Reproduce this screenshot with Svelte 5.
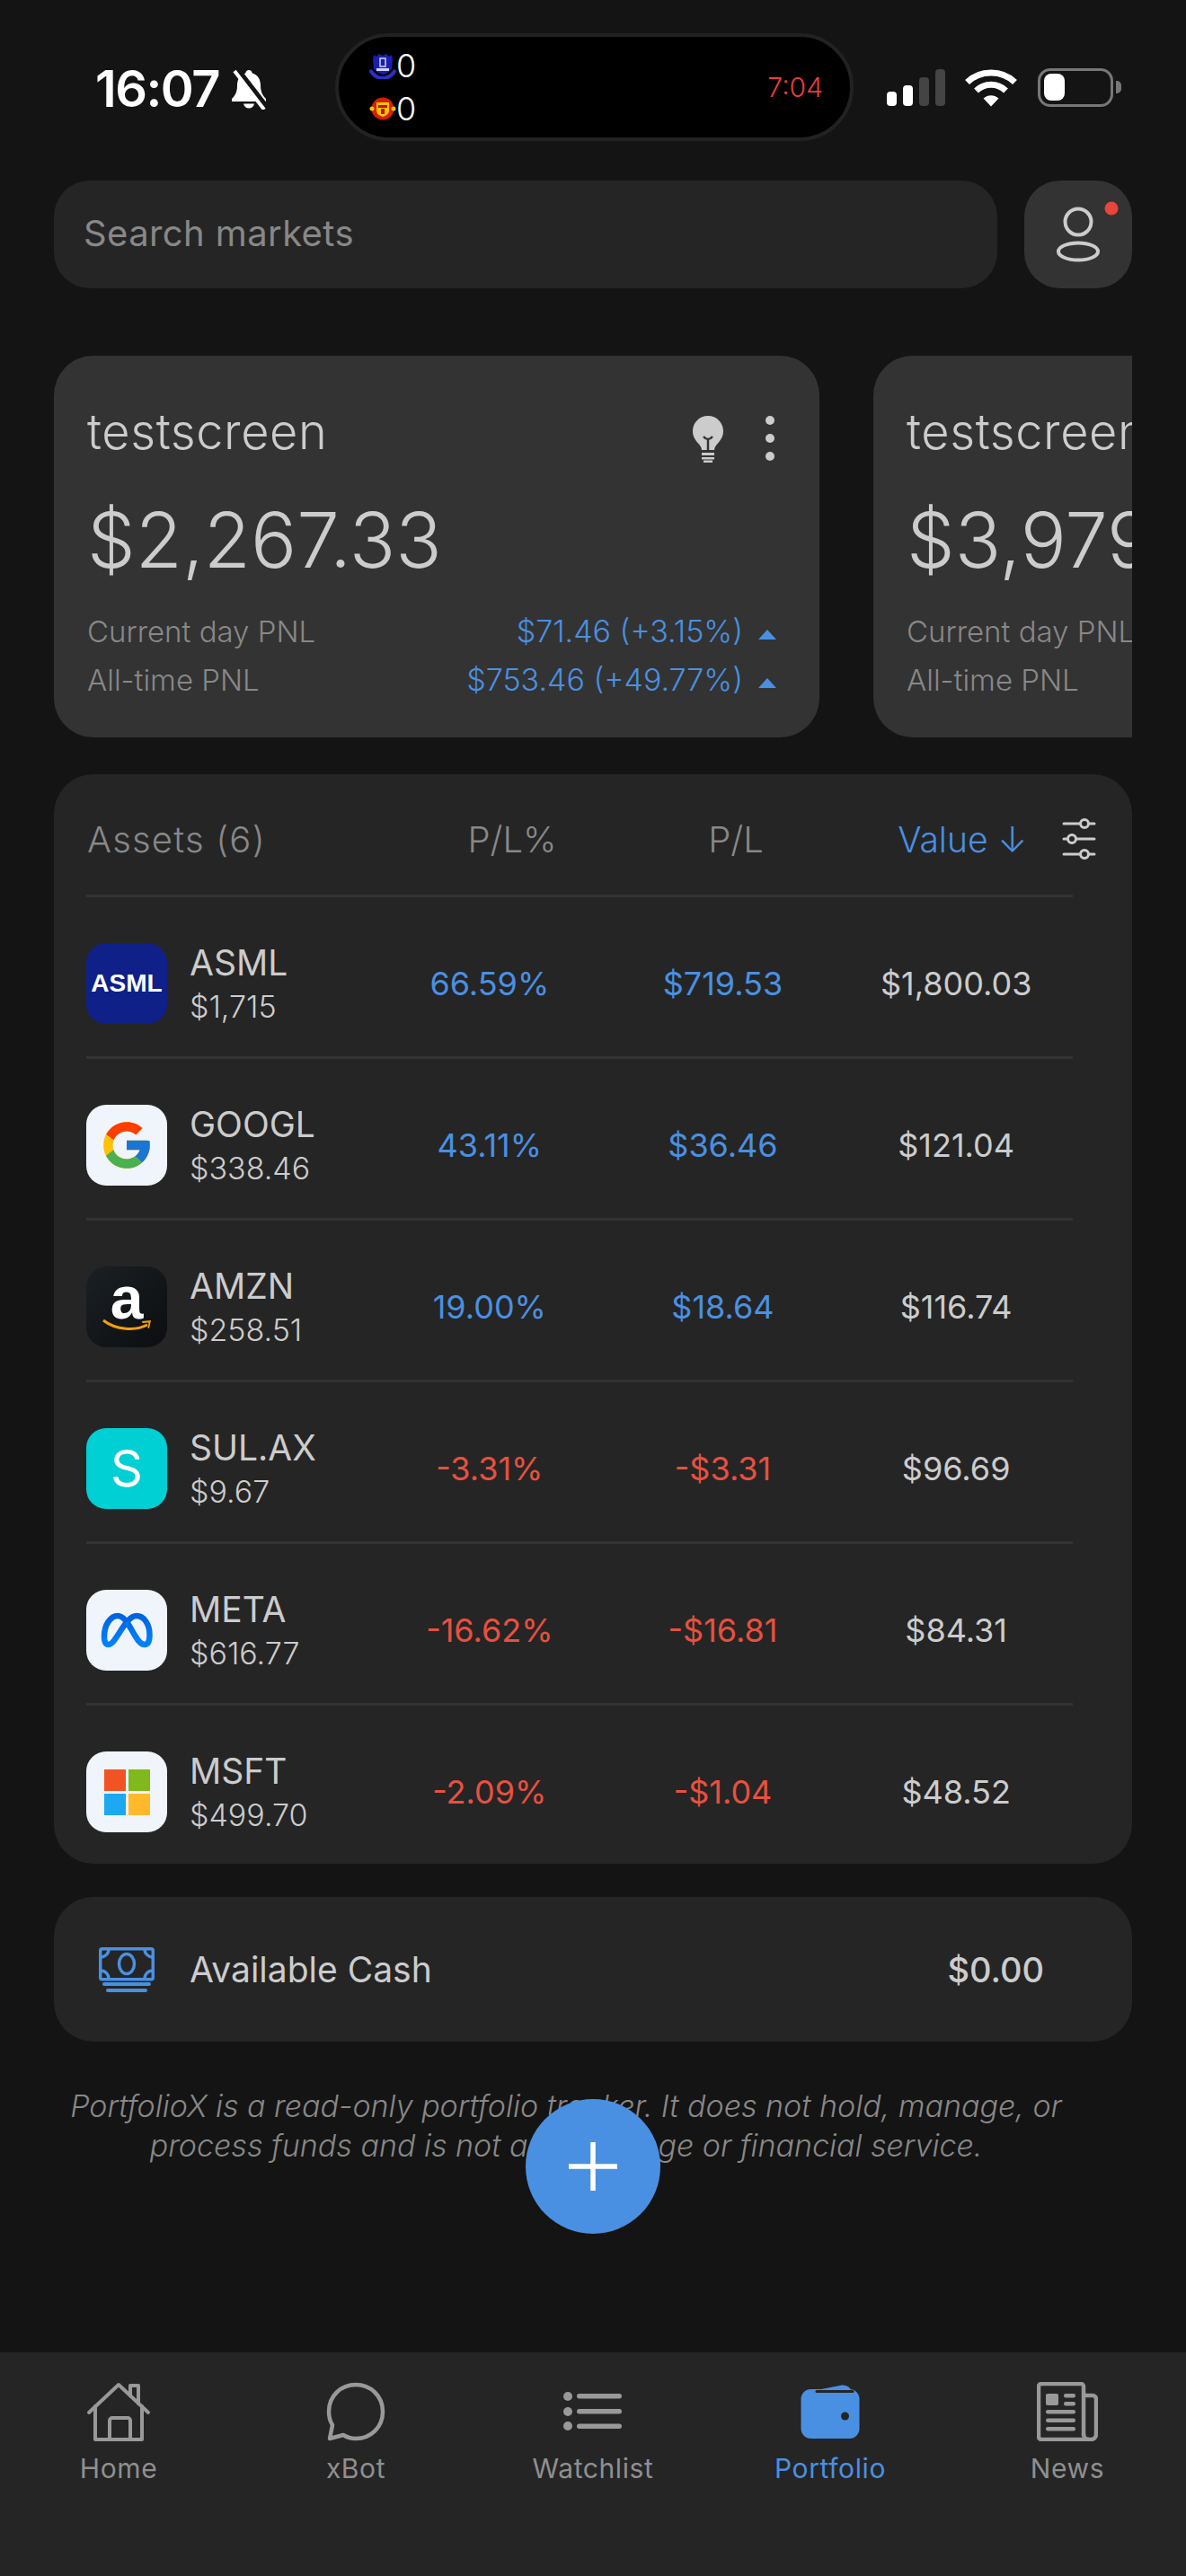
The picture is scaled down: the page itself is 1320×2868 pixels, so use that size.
<script>
  const cards = [
    { title: 'testscreen', amount: '$2,267.33', day: '$71.46 (+3.15%)', all: '$753.46 (+49.77%)', actions: true },
    { title: 'testscreen', amount: '$3,979', day: '', all: '', actions: false }
  ];
  const assets = [
    { logo: 'asml', name: 'ASML', price: '$1,715', pct: '66.59%', pl: '$719.53', value: '$1,800.03', up: true },
    { logo: 'googl', name: 'GOOGL', price: '$338.46', pct: '43.11%', pl: '$36.46', value: '$121.04', up: true },
    { logo: 'amzn', name: 'AMZN', price: '$258.51', pct: '19.00%', pl: '$18.64', value: '$116.74', up: true },
    { logo: 'sul', name: 'SUL.AX', price: '$9.67', pct: '-3.31%', pl: '-$3.31', value: '$96.69', up: false },
    { logo: 'meta', name: 'META', price: '$616.77', pct: '-16.62%', pl: '-$16.81', value: '$84.31', up: false },
    { logo: 'msft', name: 'MSFT', price: '$499.70', pct: '-2.09%', pl: '-$1.04', value: '$48.52', up: false }
  ];
  const tabs = ['Home', 'xBot', 'Watchlist', 'Portfolio', 'News'];
</script>

<div class="page">
  <header class="status">
    <div class="status-left">
      <span class="clock">16:07</span>
      <svg class="bell" width="42" height="46" viewBox="0 0 42 46">
        <path d="M21 2c-2 0-3.500 1.400-3.700 3.400C11 7 8 12.500 8 19c0 7-2 11-6 15v3h38v-3c-4-4-6-8-6-15 0-6.500-3-12-9.300-13.600C24.500 3.400 23 2 21 2z" fill="#fff"/>
        <path d="M15 39.500c.6 3 3 5 6 5s5.400-2 6-5z" fill="#fff"/>
        <path d="M6 0 L40 44" stroke="#141414" stroke-width="8"/>
        <path d="M5 3 L38 46" stroke="#fff" stroke-width="4"/>
      </svg>
    </div>
    <div class="island">
      <div class="scores">
        <div class="score">
          <svg width="30" height="30" viewBox="0 0 30 30">
            <path d="M5 3l3 2 3-3 4 2 4-2 3 3 3-2 1 5-1 11-5 4-5 2-5-2-5-4-1-11z" fill="#1a1fb0"/>
            <path d="M1 20c4 7 9 9 14 9s10-2 14-9" fill="none" stroke="#2a30c8" stroke-width="4"/>
            <rect x="12" y="7" width="6" height="9" fill="none" stroke="#cfd3ff" stroke-width="1.500"/>
            <rect x="8" y="18" width="14" height="3" fill="#cfd3ff"/>
          </svg>
          <span>0</span>
        </div>
        <div class="score">
          <svg width="30" height="30" viewBox="0 0 30 30">
            <circle cx="15" cy="15" r="12.500" fill="#d81e05"/>
            <circle cx="3" cy="15" r="2.500" fill="#f6c400"/>
            <circle cx="27" cy="15" r="2.500" fill="#f6c400"/>
            <path d="M8 8h14v9c0 4-4 6-7 7-3-1-7-3-7-7z" fill="#f6c400"/>
            <path d="M10 11h10v3H10zM13 15h4v6h-4z" fill="#c01400"/>
          </svg>
          <span>0</span>
        </div>
      </div>
      <span class="timer">7:04</span>
    </div>
    <div class="status-right">
      <div class="signal">
        <i class="b1"></i><i class="b2"></i><i class="b3"></i><i class="b4"></i>
      </div>
      <svg class="wifi" width="58" height="43" viewBox="0 0 58 43">
        <path d="M2.500 15.500C17 1.500 41 1.500 55.500 15.500" fill="none" stroke="#fff" stroke-width="7"/>
        <path d="M12.500 25C22 16 36 16 45.500 25" fill="none" stroke="#fff" stroke-width="7"/>
        <path d="M20.500 33.500C25.500 29 32.500 29 37.500 33.500L29 42.500z" fill="#fff"/>
      </svg>
      <div class="battery"><span class="level"></span></div>
      <span class="cap"></span>
    </div>
  </header>

  <div class="search-row">
    <div class="search">Search markets</div>
    <button class="profile" aria-label="Profile">
      <svg width="120" height="120" viewBox="0 0 120 120">
        <circle cx="60" cy="46" r="14.500" fill="none" stroke="#ccc" stroke-width="4"/>
        <ellipse cx="60" cy="79" rx="22" ry="9.500" fill="none" stroke="#ccc" stroke-width="4"/>
        <circle cx="97" cy="31" r="7.500" fill="#e8453c"/>
      </svg>
    </button>
  </div>

  <section class="cards">
    {#each cards as card}
      <article class="card">
        <div class="card-head">
          <span class="card-title">{card.title}</span>
          {#if card.actions}
            <div class="card-actions">
              <svg width="34" height="52" viewBox="0 0 34 52">
                <path d="M17 0C7.500 0 0 7.500 0 17c0 6 3 10 6 13.500 2 2.300 4 4.500 4 7.500h14c0-3 2-5.200 4-7.500C31 27 34 23 34 17 34 7.500 26.500 0 17 0z" fill="#ccc"/>
                <path d="M12 23c2 2.500 3.500 3 5 3s3-.5 5-3M17 26v12" fill="none" stroke="#333" stroke-width="2.500"/>
                <path d="M10 41h14v3H10zM10 46h14v2.500H10zM12 49.500h10V52H12z" fill="#ccc"/>
              </svg>
              <span class="dots"><i></i><i></i><i></i></span>
            </div>
          {/if}
        </div>
        <div class="card-amount">{card.amount}</div>
        <div class="pnl-row">
          <span>Current day PNL</span>
          {#if card.day}<span class="pnl-val">{card.day}<b class="tri"></b></span>{/if}
        </div>
        <div class="pnl-row">
          <span>All-time PNL</span>
          {#if card.all}<span class="pnl-val">{card.all}<b class="tri"></b></span>{/if}
        </div>
      </article>
    {/each}
  </section>

  <section class="assets">
    <div class="assets-head">
      <span class="assets-title">Assets (6)</span>
      <span class="c">P/L%</span>
      <span class="c">P/L</span>
      <span class="sort">Value ↓</span>
      <svg width="40" height="46" viewBox="0 0 40 46">
        <g fill="none" stroke="#ccc" stroke-width="3" stroke-linecap="round">
          <path d="M4 6h18M32 6h6M4 23h4M18 23h20M4 40h18M32 40h6"/>
          <circle cx="27" cy="6" r="4.500"/><circle cx="13" cy="23" r="4.500"/><circle cx="27" cy="40" r="4.500"/>
        </g>
      </svg>
    </div>
    <div class="list">
      {#each assets as a}
        <div class="row">
          <div class="asset">
            <div class="logo {a.logo}">
              {#if a.logo === 'asml'}
                <span>ASML</span>
              {:else if a.logo === 'googl'}
                <svg width="62" height="62" viewBox="0 0 48 48">
                  <path fill="#FFC107" d="M43.611,20.083H42V20H24v8h11.303c-1.649,4.657-6.08,8-11.303,8c-6.627,0-12-5.373-12-12c0-6.627,5.373-12,12-12c3.059,0,5.842,1.154,7.961,3.039l5.657-5.657C34.046,6.053,29.268,4,24,4C12.955,4,4,12.955,4,24c0,11.045,8.955,20,20,20c11.045,0,20-8.955,20-20C44,22.659,43.862,21.35,43.611,20.083z"/>
                  <path fill="#FF3D00" d="M6.306,14.691l6.571,4.819C14.655,15.108,18.961,12,24,12c3.059,0,5.842,1.154,7.961,3.039l5.657-5.657C34.046,6.053,29.268,4,24,4C16.318,4,9.656,8.337,6.306,14.691z"/>
                  <path fill="#4CAF50" d="M24,44c5.166,0,9.860-1.977,13.409-5.192l-6.190-5.238C29.211,35.091,26.715,36,24,36c-5.202,0-9.619-3.317-11.283-7.946l-6.522,5.025C9.505,39.556,16.227,44,24,44z"/>
                  <path fill="#1976D2" d="M43.611,20.083H42V20H24v8h11.303c-0.792,2.237-2.231,4.166-4.087,5.571l6.193,5.238C36.971,39.205,44,34,44,24C44,22.659,43.862,21.350,43.611,20.083z"/>
                </svg>
              {:else if a.logo === 'amzn'}
                <span class="a-letter">a</span>
                <svg class="smile" width="56" height="16" viewBox="0 0 56 16">
                  <path d="M1 2c14 11 36 12 49 5" fill="none" stroke="#f0a010" stroke-width="3"/>
                  <path d="M44 3l10-1-2 9-1.500-.5 1-6-7 .5z" fill="#f0a010"/>
                </svg>
              {:else if a.logo === 'sul'}
                <span>S</span>
              {:else if a.logo === 'meta'}
                <svg width="60" height="42" viewBox="0 0 60 42">
                  <defs>
                    <linearGradient id="metaG" x1="0" y1="0" x2="0" y2="1">
                      <stop offset="0" stop-color="#0064e0"/><stop offset="1" stop-color="#0082fb"/>
                    </linearGradient>
                  </defs>
                  <path d="M5 28C5 15 12 5 20 5 33 5 39 37 50 37 54 37 55.500 32 55.500 26 55.500 14 49 5 41 5 28 5 18 37 10 37 6 37 5 33 5 28Z" fill="none" stroke="url(#metaG)" stroke-width="6.500" stroke-linejoin="round"/>
                </svg>
              {:else}
                <div class="ms"><i class="r"></i><i class="g"></i><i class="bl"></i><i class="y"></i></div>
              {/if}
            </div>
            <div class="names">
              <span class="ticker">{a.name}</span>
              <span class="price">{a.price}</span>
            </div>
          </div>
          <span class="num" class:up={a.up} class:down={!a.up}>{a.pct}</span>
          <span class="num" class:up={a.up} class:down={!a.up}>{a.pl}</span>
          <span class="num val">{a.value}</span>
        </div>
      {/each}
    </div>
  </section>

  <section class="cash">
    <svg width="62" height="50" viewBox="0 0 62 50">
      <g fill="none" stroke="#4a90e2" stroke-width="3.500">
        <rect x="1.750" y="1.750" width="58.500" height="34" rx="2"/>
        <ellipse cx="31" cy="18.500" rx="8.500" ry="11"/>
        <path d="M2 11c5 0 9-4 9-9M60 11c-5 0-9-4-9-9M2 26c5 0 9 4 9 9M60 26c-5 0-9 4-9 9"/>
      </g>
      <rect x="4" y="39" width="54" height="4" rx="2" fill="#4a90e2"/>
      <rect x="8" y="46" width="46" height="4" rx="2" fill="#4a90e2"/>
    </svg>
    <span class="cash-label">Available Cash</span>
    <span class="cash-val">$0.00</span>
  </section>

  <p class="note">PortfolioX is a read-only portfolio tracker. It does not hold, manage, or process funds and is not an exchange or financial service.</p>

  <button class="fab" aria-label="Add">
    <svg width="54" height="54" viewBox="0 0 54 54">
      <path d="M27 1v52M1 27h52" stroke="#fff" stroke-width="5.500" stroke-linecap="round"/>
    </svg>
  </button>

  <nav class="tabbar">
    {#each tabs as tab}
      <div class="tab" class:active={tab === 'Portfolio'}>
        <div class="tab-icon">
          {#if tab === 'Home'}
            <svg width="72" height="66" viewBox="0 0 72 66" fill="none" stroke="#999" stroke-width="4" stroke-linecap="round" stroke-linejoin="round">
              <path d="M3 34 36 3 69 34"/>
              <path d="M10 27V64H62V27"/>
              <path d="M26 64V43a3 3 0 0 1 3-3H46a3 3 0 0 1 3 3V64"/>
              <path d="M49 15V4H58V24"/>
            </svg>
          {:else if tab === 'xBot'}
            <svg width="66" height="66" viewBox="0 0 66 66" fill="none" stroke="#999" stroke-width="4.500" stroke-linejoin="round">
              <path d="M33 3C49 3 63 15 63 33 63 50 50 63 33 63 27 63 23 61.500 19 59L4 63 7 48C4 43 3 38 3 33 3 15 17 3 33 3Z"/>
            </svg>
          {:else if tab === 'Watchlist'}
            <svg width="66" height="66" viewBox="0 0 66 66" fill="#999">
              <circle cx="5" cy="16" r="5"/><circle cx="5" cy="33" r="5"/><circle cx="5" cy="49" r="5"/>
              <rect x="15" y="13" width="50" height="5.500" rx="2.700"/><rect x="15" y="30" width="50" height="5.500" rx="2.700"/><rect x="15" y="46.500" width="50" height="5.500" rx="2.700"/>
            </svg>
          {:else if tab === 'Portfolio'}
            <svg width="66" height="66" viewBox="0 0 66 66">
              <path d="M8 11 46 3.500C51 3 56 6 57 11z" fill="#4a90e2"/>
              <rect x="0.500" y="8" width="65" height="55" rx="11" fill="#4a90e2"/>
              <path d="M18 10.500H58" stroke="#252525" stroke-width="3" stroke-linecap="round"/>
              <circle cx="49.500" cy="38" r="4.500" fill="#252525"/>
            </svg>
          {:else}
            <svg width="68" height="66" viewBox="0 0 68 66" fill="none" stroke="#999" stroke-width="4.500" stroke-linejoin="round">
              <path d="M52 60V5a3 3 0 0 0-3-3H5a3 3 0 0 0-3 3V61a3 3 0 0 0 3 3H60c3.500 0 6-2.500 6-6V19a4 4 0 0 0-4-4H52"/>
              <path d="M52 58c0 3.500 2.500 6 6 6"/>
              <g fill="#999" stroke="none">
                <rect x="10" y="13" width="14" height="13" rx="2"/>
                <rect x="30" y="13" width="13" height="4.500" rx="2.200"/><rect x="30" y="22" width="13" height="4.500" rx="2.200"/>
                <rect x="10" y="31" width="33" height="4.500" rx="2.200"/><rect x="10" y="40.500" width="33" height="4.500" rx="2.200"/><rect x="10" y="50" width="33" height="4.500" rx="2.200"/>
              </g>
            </svg>
          {/if}
        </div>
        <span class="tab-label">{tab}</span>
      </div>
    {/each}
  </nav>
</div>

<style>
  :global(body) { margin: 0; background: #141414; }
  .page {
    position: relative;
    width: 1320px;
    height: 2868px;
    background: #141414;
    display: flex;
    flex-direction: column;
    overflow: hidden;
    font-family: Inter, "Noto Sans", sans-serif;
    color: #ccc;
  }
  button { border: 0; padding: 0; margin: 0; }

  .status { display: flex; align-items: center; height: 120px; margin-top: 37px; }
  .status-left { width: 373px; box-sizing: border-box; padding-left: 106px; display: flex; align-items: center; gap: 12px; padding-top: 4px; }
  .clock { font-size: 56px; font-weight: 600; color: #fff; letter-spacing: -1.5px; line-height: 60px; }
  .island {
    width: 577px; height: 120px; box-sizing: border-box;
    border: 4px solid #222; border-radius: 60px; background: #000;
    display: flex; align-items: center; justify-content: space-between;
    padding: 0 30px 0 34px;
  }
  .scores { display: flex; flex-direction: column; gap: 18px; }
  .score { display: flex; align-items: center; gap: 0; height: 30px; color: #fff; font-size: 36px; font-weight: 300; line-height: 30px; }
  .timer { color: #e53e3e; font-size: 30px; font-weight: 300; line-height: 30px; }
  .status-right { display: flex; align-items: center; padding-left: 37px; height: 44px; }
  .signal { display: flex; align-items: flex-end; gap: 7px; height: 41px; margin-right: 22px; }
  .signal i { display: block; width: 11px; border-radius: 4px; background: #fff; }
  .signal .b1 { height: 16px; }
  .signal .b2 { height: 23px; }
  .signal .b3 { height: 32px; background: #444; }
  .signal .b4 { height: 41px; background: #444; }
  .wifi { margin-right: 23px; }
  .battery { width: 84px; height: 43px; box-sizing: border-box; border: 3.500px solid #777; border-radius: 14px; padding: 3.500px; display: flex; }
  .level { display: block; width: 23px; background: #fff; border-radius: 8px; }
  .cap { display: block; width: 6px; height: 14px; margin-left: 3px; background: #777; border-radius: 0 5px 5px 0; }

  .search-row { display: flex; gap: 30px; margin: 44px 60px 0; }
  .search {
    flex: 1; height: 120px; border-radius: 40px; background: #252525;
    color: #888; font-size: 40px; letter-spacing: 0.4px; line-height: 118px; padding-left: 33px;
  }
  .profile { width: 120px; height: 120px; border-radius: 40px; background: #333; flex: none; }
  .profile svg { display: block; }

  .cards { display: flex; gap: 60px; margin: 75px 60px 0; overflow: hidden; }
  .card {
    flex: none; width: 852px; height: 425px; box-sizing: border-box;
    background: #333; border-radius: 44px; padding: 40px 37px 0;
  }
  .card-head { display: flex; justify-content: space-between; height: 90px; }
  .card-title { font-size: 54px; line-height: 90px; font-weight: 300; letter-spacing: 0.6px; white-space: nowrap; }
  .card-actions { display: flex; gap: 47px; margin-top: 27px; margin-right: 13px; height: 52px; }
  .card-actions svg { display: block; }
  .dots { display: flex; flex-direction: column; justify-content: space-between; width: 10px; height: 50px; }
  .dots i { display: block; width: 10px; height: 10px; border-radius: 50%; background: #ccc; }
  .card-amount { margin-top: 26px; height: 100px; line-height: 100px; font-size: 85px; font-weight: 300; white-space: nowrap; }
  .pnl-row { display: flex; justify-content: space-between; height: 54px; line-height: 54px; font-size: 33px; color: #888; font-weight: 300; white-space: nowrap; }
  .card-amount + .pnl-row { margin-top: 24px; }
  .pnl-val { color: #4a90e2; display: flex; align-items: center; font-size: 34px; margin-right: 11px; }
  .tri { width: 0; height: 0; margin-left: 17px; margin-top: 6px; border-left: 10.500px solid transparent; border-right: 10.500px solid transparent; border-bottom: 11px solid #4a90e2; }

  .assets { margin: 41px 60px 0; height: 1213px; box-sizing: border-box; background: #252525; border-radius: 44px; padding: 0 36px; }
  .assets-head {
    display: grid; grid-template-columns: 344px 260px 238px 242px 40px; align-items: center;
    height: 134px; padding-top: 10px; box-sizing: border-box;
    font-size: 40px; font-weight: 300; color: #888;
  }
  .assets-title { letter-spacing: 1.200px; margin-left: 1px; }
  .assets-head svg { display: block; }
  .c { text-align: center; }
  .sort { text-align: right; padding-right: 37px; color: #4a90e2; font-size: 39px; }
  .list { width: 1098px; border-top: 3px solid #333; }
  .row {
    display: grid; grid-template-columns: 319px 1fr 1fr 1fr; align-items: center;
    box-sizing: border-box; height: 180px; padding: 46px 0 31px;
    border-bottom: 3px solid #333;
  }
  .row:last-child { border-bottom-color: transparent; }
  .asset { display: flex; align-items: center; gap: 25px; }
  .logo {
    position: relative; width: 90px; height: 90px; border-radius: 22px; flex: none;
    display: flex; align-items: center; justify-content: center;
    background: #f0f4fb;
  }
  .logo svg { display: block; }
  .asml { background: #0f2089; color: #fff; font-family: "Liberation Sans", sans-serif; font-weight: 700; font-size: 28px; }
  .amzn { background: linear-gradient(135deg, #1b2024, #0c0e10); }
  .a-letter { color: #fff; font-family: "Liberation Sans", sans-serif; font-weight: 700; font-size: 66px; line-height: 66px; margin-bottom: 20px; }
  .smile { position: absolute; left: 18px; top: 58px; }
  .sul { background: #00cfd3; color: #fff; font-size: 56px; font-weight: 400; }
  .ms { display: grid; grid-template-columns: 24px 24px; gap: 3px; }
  .ms i { display: block; width: 24px; height: 24px; }
  .ms .r { background: #f25325; }
  .ms .g { background: #80b81d; }
  .ms .bl { background: #1ca9f0; }
  .ms .y { background: #ffb92b; }
  .names { display: flex; flex-direction: column; padding-top: 2px; }
  .ticker { font-size: 39px; line-height: 49px; font-weight: 400; color: #ccc; }
  .price { font-size: 34px; line-height: 49px; font-weight: 300; color: #ccc; }
  .num { text-align: center; font-size: 36px; font-weight: 400; }
  .up { color: #4a90e2; }
  .down { color: #e8503f; }
  .val { color: #ccc; }

  .cash {
    display: flex; align-items: center; margin: 37px 60px 0; height: 161px; box-sizing: border-box;
    background: #252525; border-radius: 44px; padding: 0 98px 0 50px; gap: 39px;
  }
  .cash svg { display: block; }
  .cash-label { flex: 1; font-size: 39px; font-weight: 400; color: #ccc; }
  .cash-val { font-size: 38px; font-weight: 500; color: #ccc; }

  .note {
    margin: 50px 0 0; box-sizing: border-box; width: 1260px; padding: 0 70px;
    text-align: center; font-size: 34px; line-height: 44px; font-style: italic; font-weight: 300; color: #888;
  }
  .fab {
    position: absolute; left: 585px; top: 2337px; width: 150px; height: 150px; border-radius: 50%;
    background: #4a90e2; display: flex; align-items: center; justify-content: center;
  }
  .fab svg { display: block; }

  .tabbar {
    margin-top: auto; height: 249px; background: #252525; display: grid; grid-template-columns: repeat(5, 264px);
    box-sizing: border-box; padding-top: 33px;
  }
  .tab { display: flex; flex-direction: column; align-items: center; color: #999; }
  .tab-icon { height: 66px; display: flex; align-items: center; justify-content: center; }
  .tab-icon svg { display: block; }
  .tab-label { margin-top: 10px; font-size: 30px; line-height: 40px; font-weight: 400; letter-spacing: 0.6px; color: #8f8f8f; }
  .tab.active .tab-label { color: #4a90e2; }
</style>
